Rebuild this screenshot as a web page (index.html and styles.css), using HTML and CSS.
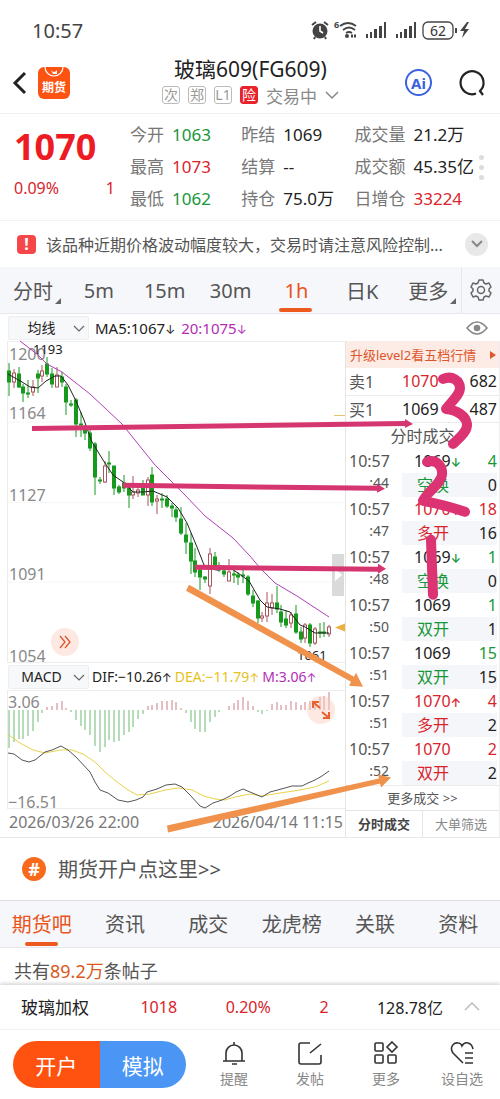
FILE: index.html
```html
<!DOCTYPE html>
<html lang="zh-CN">
<head>
<meta charset="UTF-8">
<meta name="viewport" content="width=device-width, initial-scale=1.0">
<title>玻璃609(FG609)</title>
<link rel="stylesheet" href="styles.css">
</head>
<body>
    <div class="status-bar">
        <span class="clock">10:57</span>
        <svg class="status-icons" width="160" height="22" viewBox="0 0 160 22">
            <circle cx="8" cy="12" r="7.5" fill="#444"/>
            <path d="M8 7v5l3 2" stroke="#fff" stroke-width="1.6" fill="none"/>
            <path d="M0 6l4-3M16 6l-4-3M3 18l-1 2M13 18l1 2" stroke="#444" stroke-width="2"/>
            <text x="22" y="9" font-size="9" font-weight="bold" fill="#444">6</text>
            <path d="M28 7q8-6 16 0M31 11q6-5 12 0M34 14q3-2 6 0" stroke="#444" stroke-width="1.8" fill="none"/>
            <circle cx="35" cy="17" r="2" fill="#444"/>
            <path d="M39 17h5" stroke="#444" stroke-width="3" stroke-dasharray="2 1"/>
            <g fill="#444">
                <path d="M54 15h2v4h-2zM58 13h2v6h-2zM62 10h3v9h-3zM67 7h3v12h-3zM72 3h2v16h-2z"/>
                <path d="M84 15h2v4h-2zM88 13h2v6h-2zM92 10h3v9h-3zM97 7h3v12h-3zM102 3h2v16h-2z"/>
                <path d="M143 9h2v5h-2zM155 3l-7 9h4l-2 7 7-9h-4l4-7z"/>
            </g>
            <rect x="111" y="3" width="30" height="17" rx="5" fill="none" stroke="#444" stroke-width="1.3"/>
            <text x="126" y="17" font-size="14" text-anchor="middle" fill="#333">62</text>
        </svg>
    </div>

    <header class="header">
        <button class="icon-btn" aria-label="返回">
            <svg width="16" height="24" viewBox="0 0 16 24"><path d="M13 2L3 12l10 10" fill="none" stroke="#222" stroke-width="3"/></svg>
        </button>
        <a class="logo" href="#">
            <svg width="32" height="12" viewBox="0 0 32 12">
                <path d="M7 0a9 9 0 0 0 18 0" fill="none" stroke="#fff" stroke-width="1.2"/>
                <path d="M13 3q3 4 6 0v4h-4z" fill="#fff"/>
            </svg>
            <span>期货</span>
        </a>
        <div class="heading">
            <h1>玻璃609(FG609)</h1>
            <div class="tags">
                <span class="tag">次</span><span class="tag">郑</span><span class="tag">L1</span><span class="tag tag-risk">险</span>
                <span class="state">交易中</span>
                <svg width="14" height="8" viewBox="0 0 14 8"><path d="M1 1l6 6 6-6" fill="none" stroke="#888" stroke-width="1.5"/></svg>
            </div>
        </div>
        <button class="ai-btn">Ai</button>
        <button class="icon-btn" aria-label="搜索">
            <svg width="28" height="28" viewBox="0 0 28 28"><path d="M18 24.500A11.500 11.500 0 1 1 22 22l3 4" fill="none" stroke="#222" stroke-width="2.200"/></svg>
        </button>
    </header>

    <section class="quote">
        <div class="last">
            <div class="price">1070</div>
            <div class="change"><span>0.09%</span><span>1</span></div>
        </div>
        <dl>
            <div><dt>今开</dt><dd class="green">1063</dd></div>
            <div><dt>最高</dt><dd class="red">1073</dd></div>
            <div><dt>最低</dt><dd class="green">1062</dd></div>
        </dl>
        <dl>
            <div><dt>昨结</dt><dd>1069</dd></div>
            <div><dt>结算</dt><dd>--</dd></div>
            <div><dt>持仓</dt><dd>75.0万</dd></div>
        </dl>
        <dl>
            <div><dt>成交量</dt><dd>21.2万</dd></div>
            <div><dt>成交额</dt><dd>45.35亿</dd></div>
            <div><dt>日增仓</dt><dd class="red">33224</dd></div>
        </dl>
        <div class="dots"><i></i><i></i><i></i></div>
    </section>

    <div class="notice">
        <span class="alert">!</span>
        <p>该品种近期价格波动幅度较大，交易时请注意风险控制...</p>
        <button class="round-btn" aria-label="展开">
            <svg width="12" height="8" viewBox="0 0 12 8"><path d="M1 1l5 5 5-5" fill="none" stroke="#888" stroke-width="2"/></svg>
        </button>
    </div>

    <nav class="period">
        <button class="has-more">分时</button>
        <button>5m</button>
        <button>15m</button>
        <button>30m</button>
        <button class="active">1h</button>
        <button>日K</button>
        <button class="has-more">更多</button>
        <button class="gear" aria-label="设置">
            <svg width="22" height="22" viewBox="0 0 22 22" fill="none" stroke="#666" stroke-width="1.500" stroke-linejoin="round">
                <path d="M9 1h4l1 3 2 1 3-1 2 4-2 2v2l2 2-2 4-3-1-2 1-1 3H9l-1-3-2-1-3 1-2-4 2-2v-2L1 8l2-4 3 1 2-1z"/>
                <circle cx="11" cy="11" r="3.500"/>
            </svg>
        </button>
    </nav>

    <div class="indicator">
        <label class="picker">
            <select aria-label="主图指标"><option>均线</option><option>BOLL</option></select>
            <svg width="12" height="7" viewBox="0 0 12 7"><path d="M1 1l5 5 5-5" fill="none" stroke="#666" stroke-width="1.200"/></svg>
        </label>
        <span>MA5:1067<b class="arrow">↓</b></span>
        <span class="purple">20:1075<b class="arrow">↓</b></span>
        <button class="icon-btn eye" aria-label="显示">
            <svg width="22" height="14" viewBox="0 0 22 14" fill="none" stroke="#888" stroke-width="1.600"><path d="M1 7q10-12 20 0-10 12-20 0z"/><circle cx="11" cy="7" r="2.500" fill="#888"/></svg>
        </button>
    </div>

    <main class="board">
        <div class="charts">
            <div class="kline">
                <svg id="kline" viewBox="7 341 338 322">
                    <path class="grid-line" d="M7 422H345M7 502.500H345M7 582H345"/>
                    <g class="axis">
                        <text x="9" y="360">1200</text>
                        <text x="9" y="419">1164</text>
                        <text x="9" y="501">1127</text>
                        <text x="9" y="580">1091</text>
                        <text x="9" y="662">1054</text>
                    </g>
                    <g id="candles"></g>
                    <polyline class="ma20" points="20,341 38,355 47,364 62,372 90,394 122,424 155,465 167,477 183,493 205,516 233,538 250,556 260,568 275,583 297,596 329,617"/>
                    <path class="ma5" d="M8 374L15 378L22 382L30 387L38 388L46 381L55 376L61 376L68 385L76 401L84 420L92 442L103 460L113 475L123 482L133 492L143 492L153 491L167 497L178 508L187 523L197 547L204 565L210 569L217 570L230 568L238 573L249 581L260 600L267 607L280 609L290 612L300 625L305 627L315 633L329 633"/>
                    <text class="mark" x="33" y="354">1193</text>
                    <text class="mark" x="297" y="660">1061</text>
                    <path d="M334 415.500h11" stroke="#e8c36a"/>
                    <path d="M335 627.500l10-4v8z" fill="#ecb13c"/>
                    <rect x="332" y="554" width="12" height="42" fill="#dadada"/>
                    <path d="M335 569l7 6-7 6z" fill="#fff"/>
                </svg>
                <button class="float-btn forward" aria-label="快进">
                    <svg width="14" height="12" viewBox="0 0 14 12"><path d="M2 0l5 6-5 6M7 0l5 6-5 6" fill="none" stroke="#e0532a" stroke-width="1.300"/></svg>
                </button>
            </div>

            <div class="indicator sub">
                <label class="picker">
                    <select aria-label="副图指标"><option>MACD</option><option>KDJ</option></select>
                    <svg width="12" height="7" viewBox="0 0 12 7"><path d="M1 1l5 5 5-5" fill="none" stroke="#666" stroke-width="1.200"/></svg>
                </label>
                <span>DIF:−10.26<b class="arrow">↑</b></span>
                <span class="yellow">DEA:−11.79<b class="arrow">↑</b></span>
                <span class="purple">M:3.06<b class="arrow">↑</b></span>
            </div>

            <div class="macd">
                <svg id="macd" viewBox="7 690 338 119">
                    <g id="bars"></g>
                    <g class="axis">
                        <text x="8" y="708">3.06</text>
                        <text x="8" y="808">−16.51</text>
                    </g>
                    <polyline class="dea" points="9,735 20,743 33,750 45,753 60,750 72,750 83,754 95,762 105,772 117,782 128,790 137,795 150,794 165,790 178,788 192,790 204,796 215,799 225,800 235,797 250,794 262,796 280,793 300,790 315,787 329,781"/>
                    <polyline class="dif" points="8,753 14,754 22,760 29,762 35,760 45,752 52,750 61,746 68,750 76,757 90,772 95,782 100,790 108,793 118,800 128,802 136,800 143,797 147,792 157,789 166,785 175,784 182,787 190,795 200,806 205,808 213,803 222,800 230,796 236,792 243,789 250,792 262,797 270,792 285,788 292,786 302,786 308,783 315,780 322,776 329,771"/>
                </svg>
                <button class="float-btn expand" aria-label="全屏">
                    <svg width="18" height="20" viewBox="0 0 18 20"><path d="M8 8L1 2M1 8V2h6M10 12l7 6M17 12v6h-6" fill="none" stroke="#e8622f" stroke-width="2"/></svg>
                </button>
            </div>
            <div class="dates"><span>2026/03/26 22:00</span><span>2026/04/14 11:15</span></div>
        </div>

        <aside class="trades">
            <a class="promo" href="#">升级level2看五档行情<i></i></a>
            <table class="depth">
                <tr><th>卖1</th><td class="red">1070</td><td>682</td></tr>
                <tr><th>买1</th><td>1069</td><td>487</td></tr>
            </table>
            <h2>分时成交</h2>
            <table class="ticks">
                <tr><td>10:57</td><td>1069<b class="arrow green">↓</b></td><td class="green">4</td></tr>
                <tr class="kind"><td>:44</td><td class="green">空换</td><td>0</td></tr>
                <tr><td>10:57</td><td class="red">1070<b class="arrow">↑</b></td><td class="red">18</td></tr>
                <tr class="kind"><td>:47</td><td class="red">多开</td><td>16</td></tr>
                <tr><td>10:57</td><td>1069<b class="arrow green">↓</b></td><td class="green">1</td></tr>
                <tr class="kind"><td>:48</td><td class="green">空换</td><td>0</td></tr>
                <tr><td>10:57</td><td>1069</td><td class="green">1</td></tr>
                <tr class="kind"><td>:50</td><td class="green">双开</td><td>1</td></tr>
                <tr><td>10:57</td><td>1069</td><td class="green">15</td></tr>
                <tr class="kind"><td>:51</td><td class="green">双开</td><td>15</td></tr>
                <tr><td>10:57</td><td class="red">1070<b class="arrow">↑</b></td><td class="red">4</td></tr>
                <tr class="kind"><td>:51</td><td class="red">多开</td><td>2</td></tr>
                <tr><td>10:57</td><td class="red">1070</td><td class="red">2</td></tr>
                <tr class="kind"><td>:52</td><td class="red">双开</td><td>2</td></tr>
            </table>
            <a class="more" href="#">更多成交 &gt;&gt;</a>
            <div class="switch"><button class="active">分时成交</button><button>大单筛选</button></div>
        </aside>

        <!-- user drawing on top of the board -->
        <svg class="drawing" viewBox="0 341 500 496" preserveAspectRatio="none">
            <g fill="#d6366f">
                <path d="M32 426L405 421V419L413 424L405 428V426L32 431z"/>
                <path d="M123 483L377 486V484L385 489L377 493V491L123 488z"/>
                <path d="M195 565L378 567V564L386 569L378 574V572L195 570z"/>
            </g>
            <g fill="#f0924c">
                <path d="M189 585L354 677L356 673L363 687L349 686L351 682L186 591z"/>
                <path d="M167 826L379 779L378 775L391 778L381 788L380 784L168 833z"/>
            </g>
            <g fill="none" stroke="#dc3372" stroke-width="10" stroke-linecap="round" stroke-linejoin="round">
                <path d="M443 379C452 375 460 381 460 388S451 402 446 409C457 410 466 416 467 424S457 440 453 444"/>
                <path d="M427 462C436 459 443 466 442 475S428 491 423 501Q445 505 465 512"/>
                <path d="M431 540L433 595"/>
            </g>
        </svg>
    </main>

    <a class="open-account" href="#">
        <span class="hash">#</span>期货开户点这里&gt;&gt;
    </a>

    <nav class="tabs">
        <a class="active" href="#">期货吧</a>
        <a href="#">资讯</a>
        <a href="#">成交</a>
        <a href="#">龙虎榜</a>
        <a href="#">关联</a>
        <a href="#">资料</a>
    </nav>

    <p class="count">共有<em>89.2万</em>条帖子</p>

    <footer class="bottom">
        <div class="index-row">
            <span>玻璃加权</span>
            <span class="red">1018</span>
            <span class="red">0.20%</span>
            <span class="red">2</span>
            <span>128.78亿</span>
            <svg width="16" height="9" viewBox="0 0 16 9"><path d="M1 8l7-7 7 7" fill="none" stroke="#bbb" stroke-width="1.500"/></svg>
        </div>
        <div class="actions">
            <div class="pill"><button class="open">开户</button><button class="demo">模拟</button></div>
            <button class="action">
                <svg width="24" height="24" viewBox="0 0 24 24"><path d="M1 20h22M4 20v-8a8 8 0 0 1 16 0v8M12 1v3M10 23h5"/></svg>提醒
            </button>
            <button class="action">
                <svg width="24" height="24" viewBox="0 0 24 24"><path d="M12 2H3q-2 0-2 2v17q0 2 2 2h18q2 0 2-2v-7M12 12L23 3"/></svg>发帖
            </button>
            <button class="action">
                <svg width="24" height="24" viewBox="0 0 24 24"><rect x="1" y="2" width="8" height="8" rx="1"/><path d="M18 1l5 5-5 5-5-5z"/><rect x="1" y="14" width="8" height="8" rx="1"/><rect x="14" y="14" width="8" height="8" rx="1"/></svg>更多
            </button>
            <button class="action">
                <svg width="24" height="24" viewBox="0 0 24 24"><path d="M13 22L3 12C-1 6 4 1 8 2q3 0 4 3 2-4 6-3 4 1 5 6M15 12h8M15 17h8M15 22h8"/></svg>设自选
            </button>
        </div>
    </footer>

    <script src="chart.js"></script>
</body>
</html>
```
FILE: styles.css
```css
* {
    box-sizing: border-box;
}
body {
    margin: 0;
    font-family: "Noto Sans", "Noto Sans CJK SC", sans-serif;
    font-size: 16px;
    color: #222;
    background-color: #fff;
}
h1, h2, p, dl, dd {
    margin: 0;
    font-weight: normal;
}
button {
    border: none;
    padding: 0;
    background: none;
    font-family: inherit;
    font-size: inherit;
    color: inherit;
    cursor: pointer;
}
a {
    color: inherit;
    text-decoration: none;
}
svg {
    display: block;
    overflow: visible;
}
table {
    width: 100%;
    border-collapse: collapse;
}
.red {
    color: #d9242c;
}
.green {
    color: #16973a;
}
.purple {
    color: #b32cb8;
}
.yellow {
    color: #e5c21c;
}
.arrow {
    font-family: Inter, "DejaVu Sans", sans-serif;
    font-weight: normal;
    line-height: 1;
}

/* top */
.status-bar {
    display: flex;
    justify-content: space-between;
    align-items: center;
    height: 56px;
    padding: 4px 28px 0 32px;
}
.clock {
    font-size: 20px;
    color: #444;
}
.header {
    display: flex;
    align-items: center;
    height: 58px;
    padding: 0 14px 4px 12px;
    border-bottom: 1px solid #f2f2f2;
}
.logo {
    width: 32px;
    height: 32px;
    margin-left: 10px;
    border-radius: 6px;
    background-color: #fd5312;
    color: #fff;
    font-size: 12px;
    font-weight: bold;
    line-height: 17px;
    text-align: center;
}
.heading {
    flex: 1;
    align-self: flex-start;
    padding-left: 26px;
}
h1 {
    font-size: 21px;
    line-height: 26px;
    text-align: center;
}
.tags {
    display: flex;
    justify-content: center;
    align-items: center;
    gap: 8px;
    height: 26px;
    color: #888;
}
.tag {
    width: 18px;
    height: 18px;
    border: 1px solid #bbb;
    border-radius: 3px;
    font-size: 14px;
    line-height: 16px;
    text-align: center;
    color: #999;
}
.tag-risk {
    border-color: #e8232b;
    background-color: #e8232b;
    color: #fff;
}
.state {
    font-size: 17px;
}
.ai-btn {
    width: 27px;
    height: 27px;
    margin-right: 26px;
    border: 2px solid #3a62e0;
    border-radius: 50%;
    font-size: 15px;
    font-weight: bold;
    line-height: 20px;
    color: #3a62e0;
}

/* quote */
.quote {
    position: relative;
    display: grid;
    grid-template-columns: 101px 1fr 1fr 1.4fr;
    height: 107px;
    padding: 5px 0 0 14px;
    border-bottom: 1px solid #f2f2f2;
}
.price {
    padding-top: 3px;
    font-size: 36px;
    font-weight: bold;
    line-height: 50px;
    color: #ed1c24;
}
.change {
    display: flex;
    justify-content: space-between;
    line-height: 32px;
    color: #d9242c;
}
dl {
    padding-left: 15px;
    font-size: 17px;
}
.quote dl + dl {
    padding-left: 13px;
}
dl div {
    display: flex;
    gap: 8px;
    line-height: 32px;
    white-space: nowrap;
}
dt {
    color: #777;
}
.dots {
    position: absolute;
    right: 16px;
    top: 41px;
    display: grid;
    gap: 5px;
}
.dots i {
    width: 5px;
    height: 5px;
    border-radius: 50%;
    background-color: #ddd;
}
.notice {
    display: flex;
    align-items: center;
    height: 46px;
    padding: 0 12px 0 17px;
    color: #555;
}
.alert {
    width: 19px;
    height: 19px;
    border-radius: 4px;
    background-color: #f5474a;
    color: #fff;
    font-weight: bold;
    line-height: 19px;
    text-align: center;
}
.notice p {
    flex: 1;
    margin: 0 10px;
    overflow: hidden;
    white-space: nowrap;
}
.round-btn {
    display: grid;
    place-items: center;
    width: 23px;
    height: 23px;
    border-radius: 50%;
    background-color: #e8e8e8;
}

/* period tabs */
.period {
    display: flex;
    height: 47px;
    background-color: #f6f7fa;
    border-bottom: 1px solid #e8e8ec;
}
.period button {
    position: relative;
    flex: 66;
    font-size: 20px;
    color: #555;
}
.period .gear {
    display: grid;
    flex: 38;
    place-items: center;
    border-left: 1px solid #e8e8ec;
}
.period .active, .tabs .active {
    color: #e8541a;
}
.period .active::after, .tabs .active::after {
    content: "";
    position: absolute;
    left: calc(50% - 17px);
    bottom: 1px;
    width: 33px;
    height: 4px;
    border-radius: 2px;
    background-color: #ec5a1d;
}
.has-more::after {
    content: "";
    position: absolute;
    right: 5px;
    bottom: 9px;
    border: 3px solid transparent;
    border-right-color: #666;
    border-bottom-color: #666;
}

/* indicator line */
.indicator {
    display: flex;
    align-items: center;
    gap: 6px;
    height: 27px;
    padding-left: 8px;
    font-size: 15px;
    white-space: nowrap;
}
.indicator .arrow {
    font-size: 12px;
}
.picker {
    position: relative;
}
.picker select {
    width: 81px;
    height: 24px;
    padding: 0 14px 0 0;
    border: 1px solid #eceef2;
    border-radius: 2px;
    background-color: #f7f8fa;
    appearance: none;
    font-family: inherit;
    font-size: 14px;
    color: #222;
    text-align-last: center;
}
.picker svg {
    position: absolute;
    right: 4px;
    top: 9px;
    pointer-events: none;
}
.eye {
    margin: 0 12px 0 auto;
}
.sub {
    gap: 3px;
    padding-left: 1px;
    font-size: 14px;
}

/* board */
.board {
    position: relative;
    display: grid;
    grid-template-columns: 1fr 155px;
    padding-left: 7px;
    border-bottom: 1px solid #e8e8e8;
}
.kline, .macd {
    position: relative;
    box-shadow: inset 1px 1px #ececec, inset 0 -1px #ececec;
}
.grid-line {
    stroke: #f6f6f6;
}
.axis {
    font-size: 16px;
    fill: #888;
}
.mark {
    font-size: 13px;
    fill: #222;
}
.ma5, .ma20, .dif, .dea {
    fill: none;
    stroke: #222;
    stroke-linejoin: round;
}
.ma20 {
    stroke: #b040b8;
}
.dif {
    stroke: #555;
}
.dea {
    stroke: #e8d24a;
}
.up {
    fill: #fff;
    stroke: #a8555c;
}
.down {
    fill: #159a1c;
    stroke: #159a1c;
}
.bar-up {
    stroke: #c97f86;
}
.bar-down {
    stroke: #6cb873;
}
.float-btn {
    position: absolute;
    display: grid;
    place-items: center;
    width: 28px;
    height: 28px;
    border-radius: 50%;
    background-color: rgba(250, 205, 190, 0.45);
}
.forward {
    left: 44px;
    bottom: 7px;
}
.expand {
    right: 10px;
    top: 6px;
}
.dates {
    display: flex;
    justify-content: space-between;
    padding: 0 2px;
    line-height: 27px;
    color: #777;
}

/* trades */
.trades {
    border-left: 1px solid #e4e4e4;
    border-right: 1px solid #eee;
}
.promo {
    display: flex;
    justify-content: space-between;
    align-items: center;
    height: 27px;
    padding: 0 3px 0 4px;
    background-color: #fdebe5;
    font-size: 13px;
    color: #e0562b;
    white-space: nowrap;
}
.promo i {
    border: 4px solid transparent;
    border-left: 6px solid #e0562b;
    border-right: none;
}
.depth tr {
    height: 27px;
    border-bottom: 1px solid #ececec;
}
.depth th, .depth td {
    padding: 0 2px 0 3px;
    font-weight: normal;
    text-align: left;
}
.depth th {
    width: 53px;
    color: #555;
}
.depth td:last-child, .ticks td:last-child {
    text-align: right;
}
h2 {
    font-size: 16px;
    line-height: 26px;
    text-align: center;
    color: #555;
}
.ticks {
    width: calc(100% - 2px);
}
.ticks td {
    height: 24px;
    padding: 0 0 0 3px;
    line-height: 20px;
    white-space: nowrap;
}
.ticks td:first-child {
    width: 56px;
    color: #555;
}
.ticks td:nth-child(2) {
    padding-left: 12px;
}
.ticks .kind td:first-child {
    padding: 0 13px 4px 0;
    font-size: 14px;
    line-height: 18px;
    text-align: right;
    background: none;
}
.ticks .kind td {
    background-color: #f5f6f9;
}
.ticks .kind td:nth-child(2) {
    padding-left: 15px;
}
.ticks .arrow {
    font-size: 12px;
    font-weight: 600;
}
.more {
    display: block;
    border-top: 1px solid #ececec;
    font-size: 13px;
    line-height: 24px;
    text-align: center;
    color: #555;
}
.switch {
    display: flex;
    height: 27px;
    border-top: 1px solid #e4e4e4;
    font-size: 13px;
    color: #888;
}
.switch button {
    flex: 1;
}
.switch .active {
    border-right: 1px solid #e4e4e4;
    font-weight: bold;
    color: #444;
}
.drawing {
    position: absolute;
    left: 0;
    top: 0;
    width: 100%;
    height: 100%;
    pointer-events: none;
}

/* forum */
.open-account {
    display: flex;
    align-items: center;
    gap: 12px;
    height: 62px;
    padding-left: 22px;
    font-size: 20px;
    color: #555;
}
.hash {
    width: 24px;
    height: 24px;
    border-radius: 50%;
    background-color: #f86a1c;
    color: #fff;
    font-size: 18px;
    font-weight: bold;
    line-height: 24px;
    text-align: center;
}
.tabs {
    display: flex;
    height: 48px;
    border-top: 1px solid #ddd;
    border-bottom: 1px solid #e8e8ec;
    background-color: #f6f7fa;
}
.tabs a {
    position: relative;
    flex: 1;
    font-size: 20px;
    line-height: 48px;
    text-align: center;
    color: #555;
}
.count {
    height: 37px;
    padding-left: 14px;
    font-size: 18px;
    line-height: 46px;
    color: #555;
}
.count em {
    font-style: normal;
    color: #d9581c;
}

/* bottom */
.bottom {
    position: relative;
    background-color: #fff;
    box-shadow: 0 -2px 3px rgba(0, 0, 0, 0.15);
}
.index-row {
    display: grid;
    grid-template-columns: 93px 1fr 1fr 62px 110px 14px;
    align-items: center;
    justify-items: center;
    height: 45px;
    padding: 0 21px;
    border-bottom: 1px solid #f2f2f2;
}
.index-row span:first-child {
    justify-self: start;
    font-size: 17px;
}
.actions {
    display: flex;
    align-items: center;
    height: 70px;
    padding-left: 13px;
}
.pill {
    display: flex;
    width: 173px;
    height: 47px;
    margin-right: 10px;
    border-radius: 24px;
    overflow: hidden;
    font-size: 21px;
    color: #fff;
}
.pill button {
    flex: 1;
}
.open {
    background-color: #ff5210;
}
.demo {
    background-color: #4b96f5;
}
.action {
    display: flex;
    flex: 1;
    flex-direction: column;
    align-items: center;
    gap: 4px;
    font-size: 14px;
    line-height: 20px;
    color: #888;
}
.action svg {
    fill: none;
    stroke: #333;
    stroke-width: 1.6;
}
```
FILE: chart.js
```js
// high, body top, body bottom, low, up (1) or down (0)
const candles = [
    [363,371,382,396,0],[369,373,382,388,1],[367,374,387,388,0],[384,387,393,402,0],[380,393,394,398,0],
    [380,387,392,396,1],[370,374,378,393,0],[365,371,376,382,1],[357,364,374,377,0],[368,374,384,388,0],
    [367,375,387,387,1],[372,377,382,387,0],[384,387,402,415,0],[400,404,405,407,0],[398,400,424,437,0],
    [412,424,425,437,0],[425,430,433,440,0],[428,433,448,451,0],[442,444,477,495,0],[477,480,481,484,0],
    [461,466,482,483,1],[451,463,464,473,0],[466,466,488,495,0],[485,487,492,494,0],[475,483,488,492,0],
    [487,488,495,508,0],[476,492,495,499,1],[485,490,493,497,1],[480,487,495,495,0],[477,480,495,506,1],
    [467,475,502,506,0],[495,499,501,514,1],[493,499,500,508,0],[495,499,506,508,0],[503,506,508,517,0],
    [507,510,517,522,0],[507,519,533,535,0],[523,535,542,554,0],[533,543,561,574,0],[548,561,572,577,0],
    [567,570,577,590,0],[576,577,579,583,0],[548,554,586,594,1],[552,557,566,570,0],[562,566,570,572,0],
    [567,571,574,577,0],[559,572,581,581,1],[570,574,575,583,0],[572,575,577,585,0],[570,575,576,583,0],
    [575,577,594,596,0],[590,596,603,607,0],[600,601,618,623,0],[612,616,618,622,1],[592,603,616,622,1],
    [594,603,608,615,1],[586,603,609,613,0],[605,612,622,627,0],[610,619,625,628,0],[612,615,623,628,1],
    [605,614,632,634,0],[627,632,639,643,0],[623,625,638,643,1],[623,625,643,647,0],[627,629,643,645,1],
    [623,632,633,638,0],[622,632,633,637,0],[625,627,634,637,1]
];
const bars = [
    748,742,739,739,736,731,722,713,707,706,703,701,708,712,720,726,730,735,746,752,747,740,742,741,
    735,732,727,719,714,706,705,703,701,701,700,702,708,713,722,729,732,732,722,717,712,710,706,703,
    700,697,701,706,712,714,711,704,702,705,705,701,702,705,702,701,702,697,696,692
];
const x = i => Math.round(9 + i * 4.78);

document.getElementById('candles').innerHTML = candles.map(([high, top, bottom, low, up], i) =>
    `<g class="${up ? 'up' : 'down'}">
        <path d="M${x(i)} ${high}V${low}"/>
        <rect x="${x(i) - 1.5}" y="${top}" width="3" height="${bottom - top}"/>
    </g>`
).join('');

document.getElementById('bars').innerHTML = bars.map((end, i) =>
    `<path class="${end < 710 ? 'bar-up' : 'bar-down'}" d="M${x(i)} 710V${end}"/>`
).join('');
```
